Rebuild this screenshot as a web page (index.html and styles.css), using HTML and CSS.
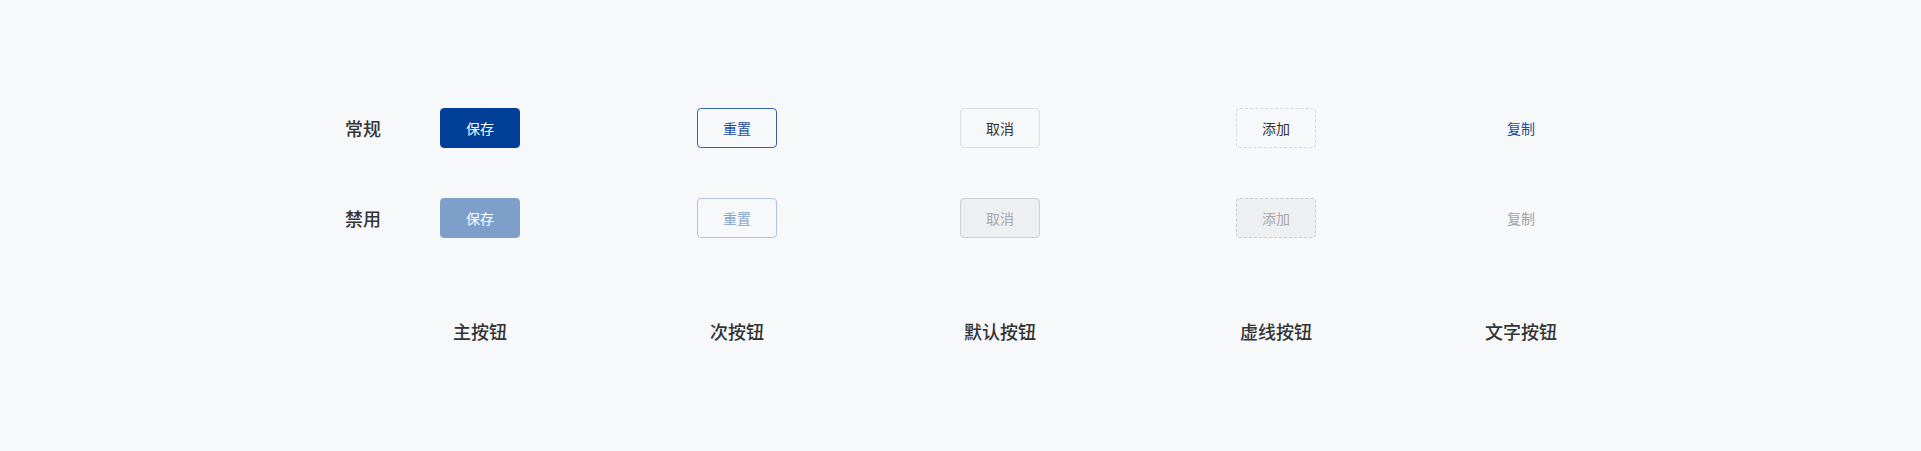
FILE: index.html
```html
<!DOCTYPE html>
<html lang="zh">
<head>
<meta charset="utf-8">
<title>按钮</title>
<link rel="stylesheet" href="styles.css">
</head>
<body>
<div class="board">
  <div class="grid">
    <div class="row-label">常规</div>
    <div class="cell"><button class="btn btn-primary">保存</button></div>
    <div class="cell"><button class="btn btn-secondary">重置</button></div>
    <div class="cell"><button class="btn btn-default">取消</button></div>
    <div class="cell"><button class="btn btn-dashed">添加</button></div>
    <div class="cell"><button class="btn btn-text">复制</button></div>

    <div class="row-label">禁用</div>
    <div class="cell"><button class="btn btn-primary" disabled>保存</button></div>
    <div class="cell"><button class="btn btn-secondary" disabled>重置</button></div>
    <div class="cell"><button class="btn btn-default" disabled>取消</button></div>
    <div class="cell"><button class="btn btn-dashed" disabled>添加</button></div>
    <div class="cell"><button class="btn btn-text" disabled>复制</button></div>

    <div class="row-label"></div>
    <div class="cell col-title">主按钮</div>
    <div class="cell col-title">次按钮</div>
    <div class="cell col-title">默认按钮</div>
    <div class="cell col-title">虚线按钮</div>
    <div class="cell col-title">文字按钮</div>
  </div>
</div>
</body>
</html>
```

FILE: styles.css
```css
* { box-sizing: border-box; }
html, body {
  margin: 0;
  padding: 0;
  background: #f7f8fa;
}
body {
  font-family: "Noto Sans CJK SC", "Noto Sans", sans-serif;
  color: #333;
}
.board {
  width: 1921px;
  height: 451px;
  padding: 108px 0 0 345px;
}
.grid {
  display: grid;
  grid-template-columns: 55px 160px 354px 172px 380px 110px;
  grid-template-rows: 40px 40px 60px;
  row-gap: 50px;
  align-items: center;
}
.grid > :nth-child(n+13) { align-self: end; }
.row-label {
  font-size: 18px;
  font-weight: 500;
  color: #333;
  line-height: 24px;
}
.cell {
  display: flex;
  justify-content: center;
  align-items: center;
}
.col-title {
  font-size: 18px;
  font-weight: 500;
  color: #333;
  line-height: 24px;
  margin-bottom: 5px;
}
.btn {
  width: 80px;
  height: 40px;
  border-radius: 4px;
  font-family: inherit;
  font-size: 14px;
  line-height: 20px;
  padding: 0;
  cursor: pointer;
  border: 1px solid transparent;
  background: transparent;
}
.btn-primary {
  background: #003f98;
  border-color: #003f98;
  color: #fff;
}
.btn-primary:disabled {
  background: #7f9fcb;
  border-color: #7f9fcb;
  color: #fff;
}
.btn-secondary {
  background: #f7f8fa;
  border-color: #3563ab;
  color: #1b4c9e;
}
.btn-secondary:disabled {
  border-color: #aec1df;
  color: #8aa3cc;
}
.btn-default {
  background: #f7f8fa;
  border-color: #dcdee2;
  color: #333;
}
.btn-default:disabled {
  background: #eeeff1;
  border-color: #cdcfd3;
  color: #a6a8ab;
}
.btn-dashed {
  background: #f7f8fa;
  border: 1px dashed #d4d6da;
  color: #333;
}
.btn-dashed:disabled {
  background: #eeeff1;
  border-color: #c9cbcf;
  color: #a6a8ab;
}
.btn-text {
  color: #1b4c9e;
}
.btn-text:disabled {
  color: #a0a2a5;
}
```
